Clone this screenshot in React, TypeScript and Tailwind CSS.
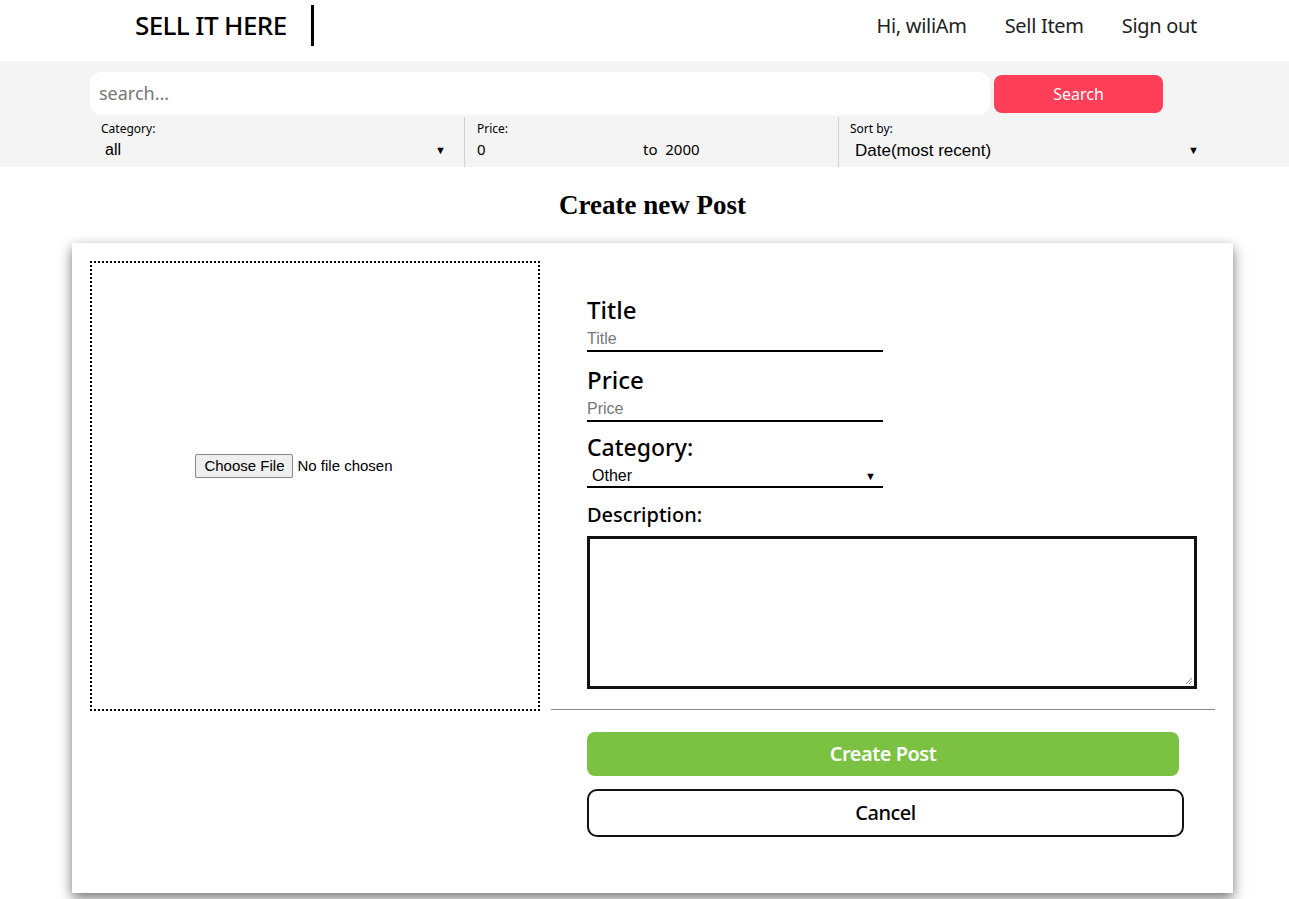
import React from 'react';

const sans = { fontFamily: '"Noto Sans", "Open Sans", sans-serif' };
const arial = { fontFamily: '"Liberation Sans", Arial, sans-serif' };

function Caret() {
  return <span className="text-[11px] leading-none text-black">▼</span>;
}

export default function App() {
  return (
    <div className="min-h-[899px] bg-white text-black" style={sans}>
      {/* Header */}
      <header className="flex h-[61px] items-center justify-between pb-[10px] pl-[135px] pr-[92px]">
        <div className="flex items-center">
          <span className="text-[26px] font-medium tracking-[-0.6px]">SELL IT HERE</span>
          <span className="ml-[24px] h-[41px] w-[3px] bg-black" />
        </div>
        <nav className="flex items-center gap-[38px] text-[20px] tracking-[-0.3px] text-[#222]">
          <span>Hi, wiliAm</span>
          <span>Sell Item</span>
          <span>Sign out</span>
        </nav>
      </header>

      {/* Search band */}
      <div className="bg-[#f4f4f4] px-[90px] pt-[11px]">
        <div className="flex items-center gap-[4px]">
          <div className="flex h-[43px] w-[900px] items-center rounded-[12px] bg-white px-[9px] text-[18px] text-[#777]">
            search...
          </div>
          <button className="h-[38px] w-[169px] rounded-[8px] bg-[#ff3e57] text-[16px] text-white">Search</button>
        </div>
        <div className="mt-[2px] flex h-[50px]">
          <div className="flex w-[375px] flex-col border-r border-[#d0d0d0] pl-[11px] pr-[18px] pt-[3px]">
            <span className="text-[12px]">Category:</span>
            <div className="flex items-center justify-between pl-[4px] text-[16px]" style={arial}>
              <span>all</span>
              <Caret />
            </div>
          </div>
          <div className="flex w-[374px] flex-col border-r border-[#d0d0d0] pl-[12px] pt-[3px]">
            <span className="text-[12px]">Price:</span>
            <div className="flex items-center text-[15px]">
              <span className="w-[166px]">0</span>
              <span>to&nbsp; 2000</span>
            </div>
          </div>
          <div className="flex flex-1 flex-col pl-[11px] pr-[0px] pt-[3px]">
            <span className="text-[12px]">Sort by:</span>
            <div className="flex items-center justify-between pl-[5px] text-[17px]" style={arial}>
              <span>Date(most recent)</span>
              <Caret />
            </div>
          </div>
        </div>
      </div>

      {/* Title */}
      <h1
        className="mt-[22px] pl-[16px] text-center text-[27px] font-bold leading-[32px]"
        style={{ fontFamily: '"Liberation Serif", "Times New Roman", serif' }}
      >
        Create new Post
      </h1>

      {/* Card */}
      <div className="mx-[72px] mt-[22px] flex h-[650px] w-[1161px] bg-white p-[18px] shadow-[0_5px_12px_rgba(0,0,0,0.55)]">
        <div className="flex h-[450px] w-[450px] items-center justify-center border-2 border-dotted border-black pb-[40px] pr-[42px]">
          <div className="flex items-center gap-[4px] text-[15px]" style={arial}>
            <span className="rounded-[2px] border border-[#888] bg-[#efefef] px-[8px] py-[0px]">Choose File</span>
            <span>No file chosen</span>
          </div>
        </div>

        <div className="ml-[11px] flex flex-1 flex-col">
          <div className="flex flex-col pl-[36px] pr-[18px] pt-[34px]">
            <label className="text-[24px] font-medium leading-[30px]">Title</label>
            <div className="w-[296px] border-b-2 border-black pb-[1px] pt-[4px] text-[16px] leading-[20px] text-[#777]" style={arial}>
              Title
            </div>
            <label className="mt-[13px] text-[24px] font-medium leading-[30px]">Price</label>
            <div className="w-[296px] border-b-2 border-black pb-[1px] pt-[4px] text-[16px] leading-[20px] text-[#777]" style={arial}>
              Price
            </div>
            <label className="mt-[10px] text-[23px] font-medium leading-[30px]">Category:</label>
            <div
              className="flex w-[296px] items-center justify-between border-b-2 border-black pl-[5px] pr-[7px] pt-[4px] text-[16px] leading-[20px]"
              style={arial}
            >
              <span>Other</span>
              <Caret />
            </div>
            <label className="mt-[13px] text-[20px] font-medium leading-[28px]">Description:</label>
            <div className="relative mt-[7px] h-[153px] w-[610px] border-[3px] border-[#111]">
              <svg className="absolute bottom-[1px] right-[1px]" width="9" height="9" viewBox="0 0 9 9">
                <path d="M8 2 L2 8 M8 5 L5 8" stroke="#888" strokeWidth="1" />
              </svg>
            </div>
          </div>

          <div className="mt-[20px] h-px w-full bg-[#888]" />

          <div className="flex flex-col pl-[36px] pt-[22px]">
            <button className="h-[44px] w-[592px] rounded-[8px] bg-[#7bc142] text-[20px] font-semibold tracking-[-0.5px] text-white">
              Create Post
            </button>
            <button className="mt-[13px] h-[48px] w-[597px] rounded-[10px] border-2 border-[#111] bg-white text-[20px] font-medium tracking-[-0.5px]">
              Cancel
            </button>
          </div>
        </div>
      </div>
    </div>
  );
}
